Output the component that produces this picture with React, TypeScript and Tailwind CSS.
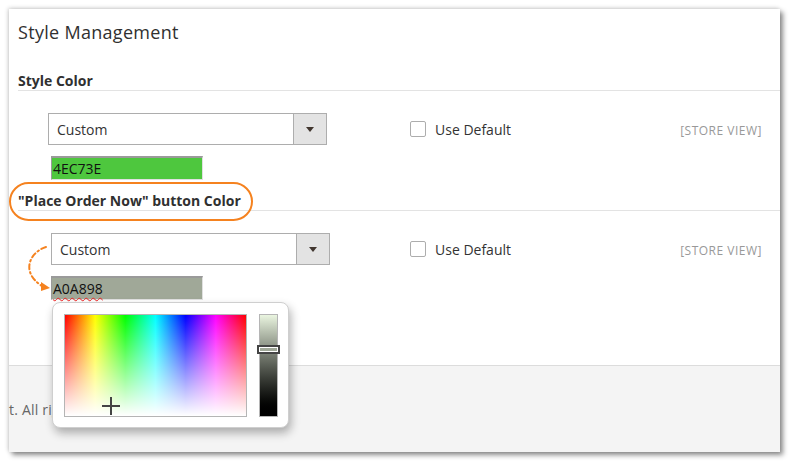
import React from "react";

const font = { fontFamily: '"Open Sans", "Noto Sans", Arial, sans-serif' };

function Select({ ml }: { ml: string }) {
  return (
    <div className={`flex h-[32px] w-[279px] border border-[#adadad] bg-white ${ml}`}>
      <div className="flex flex-1 items-center pl-[8px] text-[14px] text-[#333]">Custom</div>
      <div className="flex w-[33px] items-center justify-center border-l border-[#adadad] bg-[#e3e3e3]">
        <div className="h-0 w-0 border-x-[4px] border-t-[5px] border-x-transparent border-t-[#41362f]" />
      </div>
    </div>
  );
}

function ColorInput({ color, value, wavy }: { color: string; value: string; wavy?: boolean }) {
  return (
    <div
      className={`ml-[33px] mt-[11px] flex h-[24px] w-[152px] items-center border-t-2 border-l border-b border-r border-t-[#9a9a9a] border-l-[#9a9a9a] border-b-[#e0e0e0] border-r-[#e0e0e0] pl-[1px] text-[14px] text-[#111] ${color}`}
    >
      <span className={wavy ? "underline decoration-wavy decoration-[#e22] decoration-1 underline-offset-[3px]" : ""}>{value}</span>
    </div>
  );
}

function Row({ selectMl, color, value, wavy }: { selectMl: string; color: string; value: string; wavy?: boolean }) {
  return (
    <div className="mt-[22px] flex">
      <div className="w-[392px]">
        <Select ml={selectMl} />
        <ColorInput color={color} value={value} wavy={wavy} />
      </div>
      <div className="flex h-[32px] flex-1 items-center pr-[18px]">
        <div className="h-[16px] w-[16px] rounded-[2px] border border-[#adadad] bg-white" />
        <span className="ml-[9px] text-[14px] text-[#333]">Use Default</span>
        <span className="ml-auto mt-[3px] text-[12px] tracking-[0.5px] text-[#999]">[STORE VIEW]</span>
      </div>
    </div>
  );
}

export default function App() {
  return (
    <div className="h-[461px] w-[790px] bg-white pl-[9px] pt-[9px]" style={font}>
      <div className="relative flex h-[443px] w-[771px] flex-col overflow-visible bg-white shadow-[3px_3px_5px_rgba(0,0,0,0.45),-1px_-1px_4px_rgba(0,0,0,0.18)]">
        <div className="pl-[9px]">
          <div className="pt-[11px] text-[18px] leading-[24px] tracking-[0.3px] text-[#303030]">Style Management</div>
          <div className="mt-[27px] h-[20px] border-b border-[#e3e3e3] text-[14px] font-bold leading-[19px] text-[#303030]">
            Style Color
          </div>
          <Row selectMl="ml-[30px]" color="bg-[#4ec73e]" value="4EC73E" />
          <div className="mt-[11px] h-[20px] border-b border-[#e3e3e3] text-[14px] font-bold leading-[19px] text-[#303030]">
            "Place Order Now" button Color
          </div>
          <Row selectMl="ml-[33px]" color="bg-[#a0a898]" value="A0A898" wavy />
        </div>
        <div className="mt-[65px] flex flex-1 items-center border-t border-[#dcdcdc] bg-[#f4f4f4]">
          <span className="text-[14px] tracking-[0.2px] text-[#666]">t. All rights reserved.</span>
        </div>

        {/* annotation ellipse */}
        <div className="absolute left-[0px] top-[173px] h-[39px] w-[244px] rounded-full border-2 border-[#f5821f]" />

        {/* curved dashed arrow */}
        <svg className="absolute left-[11px] top-[231px]" width="40" height="56" viewBox="0 0 40 56">
          <path
            d="M26 7 C 10 12, 0 32, 22 46"
            fill="none"
            stroke="#f5821f"
            strokeWidth="2"
            strokeDasharray="5 3 1.5 3"
            strokeLinecap="round"
          />
          <polygon points="30,48 21,42 21,51" fill="#f5821f" />
        </svg>

        {/* color picker popup */}
        <div className="absolute left-[43px] top-[293px] h-[126px] w-[237px] rounded-[8px] border border-[#cfcfcf] bg-white shadow-[2px_5px_10px_rgba(0,0,0,0.3)]">
          <div className="absolute left-[11px] top-[11px] h-[103px] w-[183px] border border-[#b5b5b5] bg-[linear-gradient(to_right,#f00,#ff0,#0f0,#0ff,#00f,#f0f,#f00)]">
            <div className="relative h-full w-full bg-linear-to-b from-white/0 to-white">
              <div className="absolute left-[37px] top-[90px] h-[2px] w-[18px] bg-[#444]" />
              <div className="absolute left-[45px] top-[82px] h-[18px] w-[2px] bg-[#444]" />
            </div>
          </div>
          <div className="absolute left-[206px] top-[11px] h-[103px] w-[19px] border border-[#b5b5b5] bg-linear-to-b from-[#eaf5e0] to-black" />
          <div className="absolute left-[204px] top-[42px] h-[9px] w-[23px] border-2 border-[#444] bg-white p-[1px]">
            <div className="h-full w-full bg-[#a0a898]" />
          </div>
        </div>
      </div>
    </div>
  );
}
